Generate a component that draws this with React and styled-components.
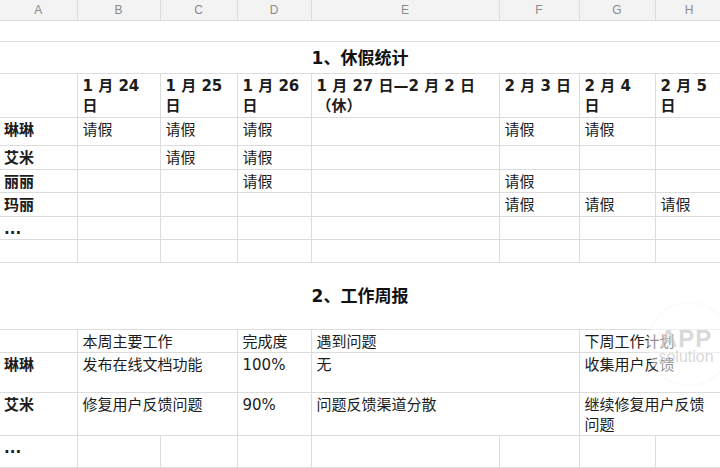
import React from 'react';
import styled, { createGlobalStyle } from 'styled-components';

const GlobalStyle = createGlobalStyle`
  html, body {
    margin: 0;
    background: #fff;
  }
  body {
    font-family: "DejaVu Sans", "Noto Sans CJK SC", sans-serif;
  }
`;

const Page = styled.div`
  position: relative;
  width: 720px;
  height: 468px;
  overflow: hidden;
`;

const Sheet = styled.table`
  border-collapse: collapse;
  table-layout: fixed;
  width: 723px;
  font-size: 15px;
  line-height: 20px;
  color: #1c1c1c;
`;

const ColHead = styled.th`
  height: 20px;
  padding: 0;
  background: #f3f3f3;
  border: 1px solid #dcdcdc;
  border-top: none;
  font: 400 12px "Liberation Sans", Arial, sans-serif;
  color: #8a8a8a;
  text-align: center;
  vertical-align: middle;
  &:first-child { border-left: none; }
`;

const Row = styled.tr`
  height: ${p => p.$h}px;
`;

const Cell = styled.td`
  padding: 2px 6px 0 5px;
  border: 1px solid #dcdcdc;
  vertical-align: top;
  font-weight: ${p => (p.$bold ? 700 : 400)};
  overflow: hidden;
  &:first-child {
    border-left: none;
    padding-left: 4px;
  }
`;

// full-width merged row (spacer or section title)
const Band = styled.td`
  padding: 0 3px 0 0;
  border-top: 1px solid #dcdcdc;
  border-bottom: 1px solid #dcdcdc;
  text-align: center;
  vertical-align: middle;
  font-size: 17px;
  font-weight: 700;
  color: #111;
`;

const Stamp = styled.div`
  position: absolute;
  left: 648px;
  top: 303px;
  width: 82px;
  height: 82px;
  border-radius: 50%;
  background: rgba(255, 255, 255, 0.5);
  box-shadow: 0 0 2px rgba(220, 220, 220, 0.6);
  display: flex;
  flex-direction: column;
  align-items: center;
  justify-content: center;
  padding: 4px 6px 0 0;
  box-sizing: border-box;
  font-family: "Liberation Sans", Arial, sans-serif;
  color: rgba(200, 200, 200, 0.7);
`;

const StampBig = styled.span`
  font-size: 24px;
  font-weight: 700;
  line-height: 20px;
  letter-spacing: 1px;
`;

const StampSmall = styled.span`
  font-size: 16px;
  font-weight: 300;
  line-height: 15px;
`;

const widths = [77, 83, 77, 74, 188, 80, 76, 68];
const letters = ['A', 'B', 'C', 'D', 'E', 'F', 'G', 'H'];

const leave = [
  { name: '琳琳', h: 28, days: ['请假', '请假', '请假', '', '请假', '请假', ''] },
  { name: '艾米', h: 24, days: ['', '请假', '请假', '', '', '', ''] },
  { name: '丽丽', h: 22, days: ['', '', '请假', '', '请假', '', ''] },
  { name: '玛丽', h: 24, days: ['', '', '', '', '请假', '请假', '请假'] },
  { name: '...', h: 23, days: ['', '', '', '', '', '', ''] },
  { name: '', h: 23, days: ['', '', '', '', '', '', ''] },
];

const dates = ['1 月 24 日', '1 月 25 日', '1 月 26 日', null, '2 月 3 日', '2 月 4 日', '2 月 5 日'];

const reports = [
  { name: '琳琳', h: 40, work: '发布在线文档功能', done: '100%', issue: '无', next: '收集用户反馈' },
  { name: '艾米', h: 42, work: '修复用户反馈问题', done: '90%', issue: '问题反馈渠道分散', next: '继续修复用户反馈问题' },
];

const App = () => {
  return (
    <Page>
      <GlobalStyle />
      <Sheet>
        <colgroup>
          {widths.map((w, i) => <col key={i} style={{ width: w }} />)}
        </colgroup>
        <thead>
          <tr>
            {letters.map(l => <ColHead key={l}>{l}</ColHead>)}
          </tr>
        </thead>
        <tbody>
          <Row $h={21}><Band colSpan={8} /></Row>
          <Row $h={32}><Band colSpan={8}>1、休假统计</Band></Row>
          <Row $h={44}>
            <Cell />
            {dates.map((d, i) =>
              d === null ? (
                <Cell key={i} $bold>1 月 27 日—2 月 2 日<br />（休）</Cell>
              ) : (
                <Cell key={i} $bold>{d}</Cell>
              )
            )}
          </Row>
          {leave.map((r, i) => (
            <Row key={i} $h={r.h}>
              <Cell $bold>{r.name}</Cell>
              {r.days.map((d, j) => <Cell key={j}>{d}</Cell>)}
            </Row>
          ))}
          <Row $h={67}><Band colSpan={8}>2、工作周报</Band></Row>
          <Row $h={23}>
            <Cell />
            <Cell colSpan={2}>本周主要工作</Cell>
            <Cell>完成度</Cell>
            <Cell colSpan={2}>遇到问题</Cell>
            <Cell colSpan={2}>下周工作计划</Cell>
          </Row>
          {reports.map((r, i) => (
            <Row key={i} $h={r.h}>
              <Cell $bold>{r.name}</Cell>
              <Cell colSpan={2}>{r.work}</Cell>
              <Cell>{r.done}</Cell>
              <Cell colSpan={2}>{r.issue}</Cell>
              <Cell colSpan={2}>{r.next}</Cell>
            </Row>
          ))}
          <Row $h={32}>
            <Cell $bold>...</Cell>
            {[0, 1, 2, 3, 4, 5, 6].map(j => <Cell key={j} />)}
          </Row>
          <Row $h={30}>
            {[0, 1, 2, 3, 4, 5, 6, 7].map(j => <Cell key={j} />)}
          </Row>
        </tbody>
      </Sheet>
      <Stamp>
        <StampBig>APP</StampBig>
        <StampSmall>solution</StampSmall>
      </Stamp>
    </Page>
  );
};

export default App;
